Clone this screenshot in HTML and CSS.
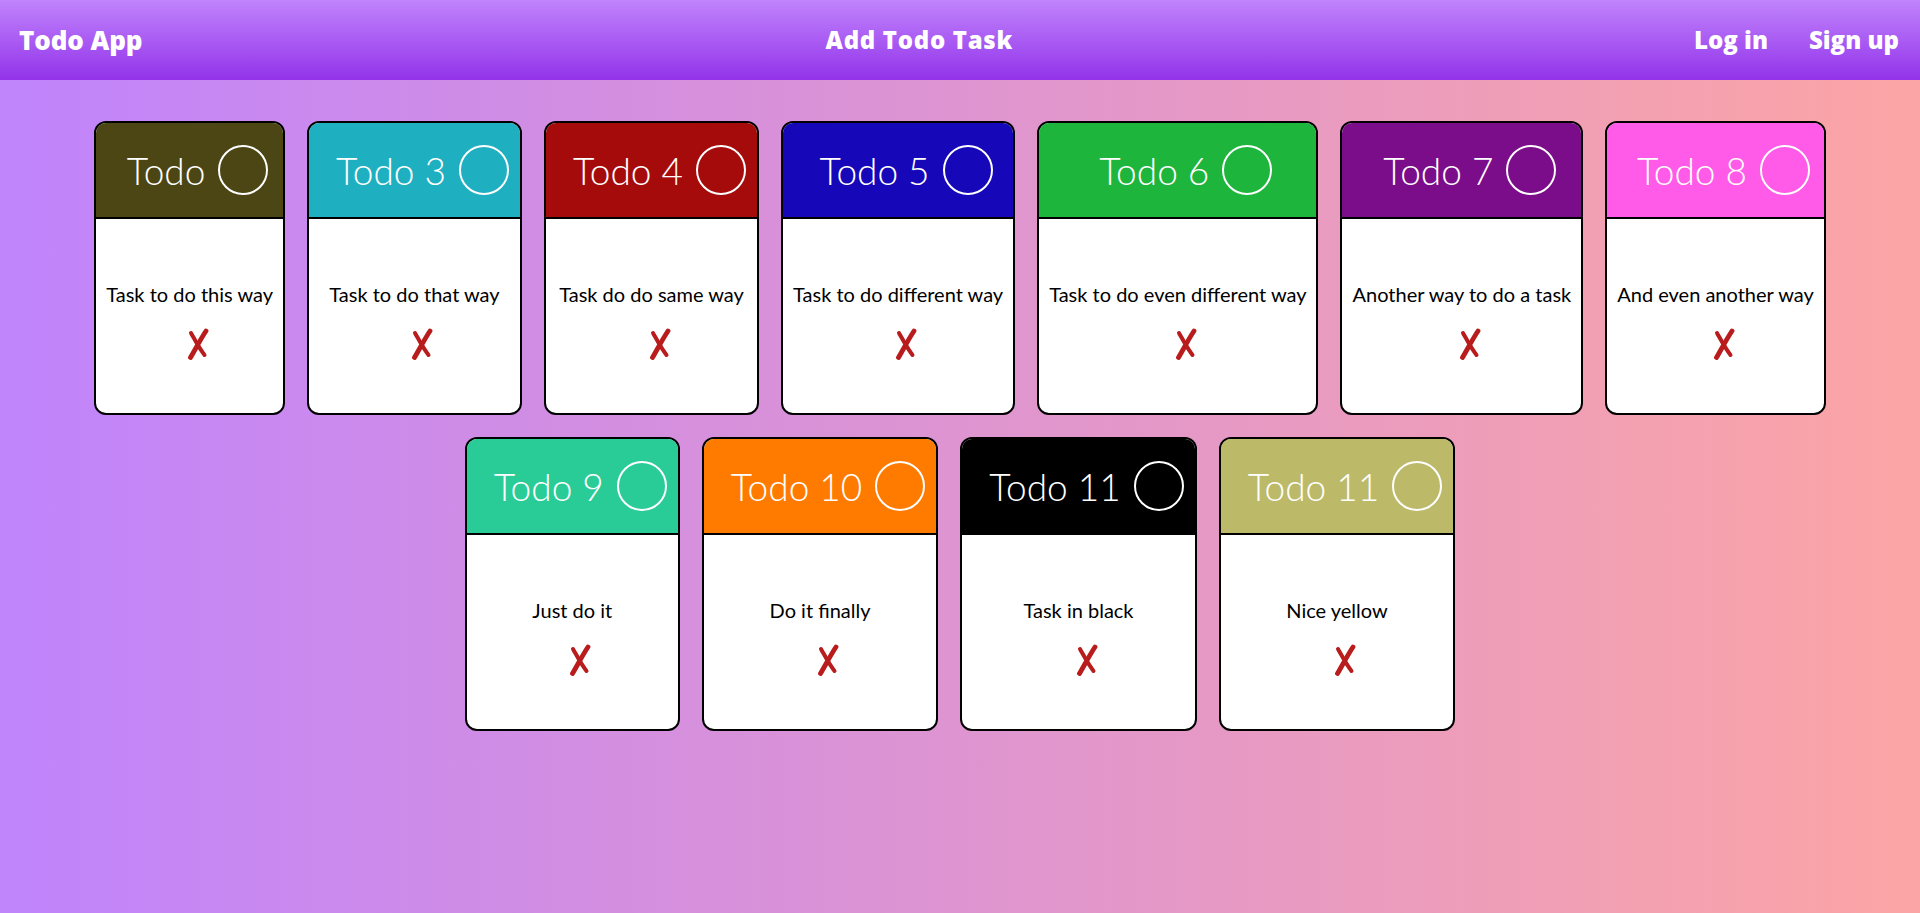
FILE: index.html
```html
<!DOCTYPE html>
<html lang="en">
<head>
<meta charset="utf-8">
<title>Todo App</title>
<link rel="stylesheet" href="styles.css">
</head>
<body>
<header class="topbar">
  <a class="brand" href="#">Todo App</a>
  <a class="nav-link add-link" href="#">Add Todo Task</a>
  <nav class="auth">
    <a class="nav-link" href="#">Log in</a>
    <a class="nav-link" href="#">Sign up</a>
  </nav>
</header>

<main class="board">
  <article class="card c-olive">
    <div class="card-head"><span class="card-title">Todo</span><span class="check"></span></div>
    <div class="card-body"><p class="card-text">Task to do this way</p><svg class="del" viewBox="0 0 22 32"><path d="M3.5 29.5 C8 22 13 12 19 3" /><path class="thin" d="M4 5 C8 12 12 20 17.5 27" /></svg></div>
  </article>
  <article class="card c-cyan">
    <div class="card-head"><span class="card-title">Todo 3</span><span class="check"></span></div>
    <div class="card-body"><p class="card-text">Task to do that way</p><svg class="del" viewBox="0 0 22 32"><path d="M3.5 29.5 C8 22 13 12 19 3" /><path class="thin" d="M4 5 C8 12 12 20 17.5 27" /></svg></div>
  </article>
  <article class="card c-red">
    <div class="card-head"><span class="card-title">Todo 4</span><span class="check"></span></div>
    <div class="card-body"><p class="card-text">Task do do same way</p><svg class="del" viewBox="0 0 22 32"><path d="M3.5 29.5 C8 22 13 12 19 3" /><path class="thin" d="M4 5 C8 12 12 20 17.5 27" /></svg></div>
  </article>
  <article class="card c-blue">
    <div class="card-head"><span class="card-title">Todo 5</span><span class="check"></span></div>
    <div class="card-body"><p class="card-text">Task to do different way</p><svg class="del" viewBox="0 0 22 32"><path d="M3.5 29.5 C8 22 13 12 19 3" /><path class="thin" d="M4 5 C8 12 12 20 17.5 27" /></svg></div>
  </article>
  <article class="card c-green">
    <div class="card-head"><span class="card-title">Todo 6</span><span class="check"></span></div>
    <div class="card-body"><p class="card-text">Task to do even different way</p><svg class="del" viewBox="0 0 22 32"><path d="M3.5 29.5 C8 22 13 12 19 3" /><path class="thin" d="M4 5 C8 12 12 20 17.5 27" /></svg></div>
  </article>
  <article class="card c-purple">
    <div class="card-head"><span class="card-title">Todo 7</span><span class="check"></span></div>
    <div class="card-body"><p class="card-text">Another way to do a task</p><svg class="del" viewBox="0 0 22 32"><path d="M3.5 29.5 C8 22 13 12 19 3" /><path class="thin" d="M4 5 C8 12 12 20 17.5 27" /></svg></div>
  </article>
  <article class="card c-pink">
    <div class="card-head"><span class="card-title">Todo 8</span><span class="check"></span></div>
    <div class="card-body"><p class="card-text">And even another way</p><svg class="del" viewBox="0 0 22 32"><path d="M3.5 29.5 C8 22 13 12 19 3" /><path class="thin" d="M4 5 C8 12 12 20 17.5 27" /></svg></div>
  </article>
  <article class="card c-teal">
    <div class="card-head"><span class="card-title">Todo 9</span><span class="check"></span></div>
    <div class="card-body"><p class="card-text">Just do it</p><svg class="del" viewBox="0 0 22 32"><path d="M3.5 29.5 C8 22 13 12 19 3" /><path class="thin" d="M4 5 C8 12 12 20 17.5 27" /></svg></div>
  </article>
  <article class="card c-orange">
    <div class="card-head"><span class="card-title">Todo 10</span><span class="check"></span></div>
    <div class="card-body"><p class="card-text">Do it finally</p><svg class="del" viewBox="0 0 22 32"><path d="M3.5 29.5 C8 22 13 12 19 3" /><path class="thin" d="M4 5 C8 12 12 20 17.5 27" /></svg></div>
  </article>
  <article class="card c-black">
    <div class="card-head"><span class="card-title">Todo 11</span><span class="check"></span></div>
    <div class="card-body"><p class="card-text">Task in black</p><svg class="del" viewBox="0 0 22 32"><path d="M3.5 29.5 C8 22 13 12 19 3" /><path class="thin" d="M4 5 C8 12 12 20 17.5 27" /></svg></div>
  </article>
  <article class="card c-yellow">
    <div class="card-head"><span class="card-title">Todo 11</span><span class="check"></span></div>
    <div class="card-body"><p class="card-text">Nice yellow</p><svg class="del" viewBox="0 0 22 32"><path d="M3.5 29.5 C8 22 13 12 19 3" /><path class="thin" d="M4 5 C8 12 12 20 17.5 27" /></svg></div>
  </article>
</main>
</body>
</html>
```
FILE: styles.css
```css
* { box-sizing: border-box; }

html, body { margin: 0; padding: 0; }

body {
  min-height: 913px;
  font-family: "Lato", "Open Sans", sans-serif;
  color: #000;
  background: linear-gradient(to right, #c084fc, #fca5a5);
}

.topbar {
  height: 80px;
  display: flex;
  align-items: center;
  justify-content: space-between;
  padding: 0 21px 0 19px;
  background: linear-gradient(to bottom, #c084fc, #9333ea);
}

.brand,
.nav-link {
  font-family: "Open Sans", sans-serif;
  font-weight: 800;
  font-size: 24px;
  color: #fff;
  text-decoration: none;
  line-height: 1;
}

.brand { font-size: 26px; letter-spacing: -0.1px; }

.add-link { letter-spacing: 0.7px; margin-left: 2px; }

.auth {
  display: flex;
  gap: 41px;
}

.board {
  display: flex;
  flex-wrap: wrap;
  justify-content: center;
  align-items: flex-start;
  gap: 22px;
  padding: 41px 40px;
}

.card {
  display: flex;
  flex-direction: column;
  border: 2px solid #000;
  border-radius: 12px;
  overflow: hidden;
  background: #fff;
}

.card-head {
  height: 96px;
  display: flex;
  align-items: center;
  justify-content: center;
  gap: 13px;
  padding: 0 11px 0 27px;
  border-bottom: 2px solid #000;
  color: #fff;
}

.card-title {
  font-family: "Lato", sans-serif;
  font-weight: 300;
  font-size: 37px;
  line-height: 1;
  white-space: nowrap;
}

.check {
  flex: none;
  width: 50px;
  height: 50px;
  border: 2px solid #fff;
  border-radius: 50%;
}

.card-body {
  height: 194px;
  display: flex;
  flex-direction: column;
  align-items: center;
  justify-content: center;
  gap: 22px;
  padding: 10px 10px 0;
}

.card-text {
  margin: 0;
  font-size: 20px;
  line-height: 24px;
  white-space: nowrap;
}

.del {
  width: 22px;
  height: 32px;
  margin-left: 16px;
  fill: none;
  stroke: #b91c1c;
  stroke-width: 4.8;
  stroke-linecap: round;
}

.del .thin { stroke-width: 4; }

.c-olive .card-head { background: #4b4614; }
.c-cyan .card-head { background: #1eafc0; }
.c-red .card-head { background: #a60b0b; }
.c-blue .card-head { background: #1607b8; }
.c-green .card-head { background: #1db53b; }
.c-purple .card-head { background: #7b0c8a; }
.c-pink .card-head { background: #ff5ae8; }
.c-teal .card-head { background: #29cc96; }
.c-orange .card-head { background: #ff7b00; }
.c-black .card-head { background: #000; }
.c-yellow .card-head { background: #bcba69; }
```
